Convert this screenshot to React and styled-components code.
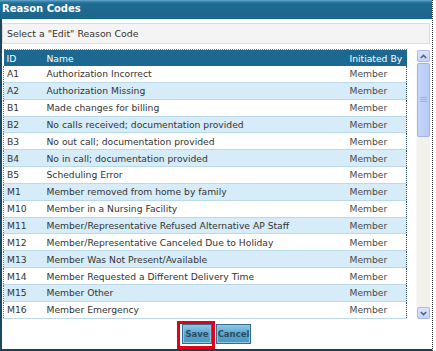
import React from "react";
import styled, { createGlobalStyle } from "styled-components";

const GlobalStyle = createGlobalStyle`
  body {
    margin: 0;
    background: #ffffff;
    font-family: "DejaVu Sans", Verdana, sans-serif;
  }
`;

const Dialog = styled.div`
  box-sizing: border-box;
  width: 433px;
  height: 351px;
  display: flex;
  flex-direction: column;
  border-left: 2px solid #1a4762;
  border-bottom: 2px solid #1d3f55;
  border-right: 1px dotted #222;
  background: #ffffff;
`;

const TitleBar = styled.div`
  height: 19px;
  line-height: 18px;
  margin-left: -2px;
  padding-left: 2px;
  background: linear-gradient(#6aaad0 0, #2d7aa3 2px, #1f6b91 4px, #1c668c 100%);
  color: #ffffff;
  font-size: 10px;
  font-weight: bold;
`;

const Body = styled.div`
  flex: 1;
  display: flex;
  flex-direction: column;
  padding: 4px 2px 0 0;
`;

const Instructions = styled.div`
  box-sizing: border-box;
  height: 21px;
  line-height: 19px;
  padding-left: 4px;
  background: #f4f4f4;
  border: 1px solid #dcdcdc;
  color: #333;
  font-size: 9.4px;
`;

const ListArea = styled.div`
  display: flex;
  margin-top: 5px;
  height: 270px;
  padding-left: 1px;
`;

const TableBox = styled.div`
  width: 404px;
  height: 270px;
  overflow: hidden;
`;

const Table = styled.table`
  width: 100%;
  table-layout: fixed;
  border-collapse: collapse;
  font-size: 9.2px;
`;

const HeadCell = styled.th`
  height: 16px;
  padding: 0 0 0 3px;
  background: #1c6890;
  color: #ffffff;
  font-weight: normal;
  text-align: left;
  border-top: 1px dotted #4c7f9c;
`;

const Row = styled.tr`
  background: ${(p) => (p.$alt ? "#d6ecf8" : "#ffffff")};
  border-bottom: 1px solid #bcd9e8;
`;

const Cell = styled.td`
  height: 15.85px;
  padding: 0 0 0 3px;
  color: ${(p) => (p.$muted ? "#4a4a4a" : "#333333")};
  white-space: nowrap;
  overflow: hidden;
  border-left: ${(p) => (p.$first ? "1px dotted #5a7888" : "none")};
  border-right: ${(p) => (p.$last ? "1px dotted #2f4f62" : "none")};
`;

const ScrollBar = styled.div`
  display: flex;
  flex-direction: column;
  width: 13px;
  height: 269px;
  margin-left: 9px;
  margin-top: 1px;
  background: #f2f1eb;
  border-left: 1px solid #f8f8f5;
`;

const ArrowButton = styled.div`
  box-sizing: border-box;
  height: 12px;
  display: flex;
  align-items: center;
  justify-content: center;
  background: linear-gradient(#dbe6fc, #c3d3f6);
  border: 1px solid #a9bde6;
  border-radius: 2px;
`;

const Thumb = styled.div`
  box-sizing: border-box;
  height: 74px;
  margin-top: 1px;
  display: flex;
  align-items: center;
  justify-content: center;
  background: linear-gradient(90deg, #c6d6fb, #b8cbf6);
  border: 1px solid #9fb5e6;
  border-radius: 2px;
`;

const Track = styled.div`
  flex: 1;
`;

const Footer = styled.div`
  flex: 1;
  display: flex;
  justify-content: center;
  align-items: flex-start;
  gap: 4px;
  padding-top: 5px;
  padding-left: 1px;
`;

const Highlight = styled.span`
  position: relative;
  display: inline-flex;
  &::after {
    content: "";
    position: absolute;
    top: -3px;
    bottom: -5px;
    left: -5px;
    right: -3px;
    border: 3px solid #e3001b;
    pointer-events: none;
  }
`;

const Button = styled.button`
  box-sizing: border-box;
  height: 20px;
  width: ${(p) => p.$w}px;
  padding: 0;
  font-family: "DejaVu Sans", Verdana, sans-serif;
  font-size: 8.5px;
  font-weight: bold;
  color: #2b4d61;
  background: linear-gradient(#93c9e4 0, #5ba7cf 45%, #4a97c1 100%);
  border: 1px solid #2f6e8f;
  box-shadow: inset 0 0 0 1px #8fc6e2;
  cursor: pointer;
`;

const Grip = () => (
  <svg width="7" height="6" viewBox="0 0 7 6">
    <path d="M0 0.5h7M0 2.5h7M0 4.5h7" stroke="#9fb3df" strokeWidth="1" />
  </svg>
);

const Chevron = ({ down }) => (
  <svg width="7" height="5" viewBox="0 0 7 5">
    <path
      d={down ? "M0.8 1l2.7 2.6L6.2 1" : "M0.8 4l2.7-2.6L6.2 4"}
      fill="none"
      stroke="#4b5f8a"
      strokeWidth="1.5"
    />
  </svg>
);

const codes = [
  ["A1", "Authorization Incorrect"],
  ["A2", "Authorization Missing"],
  ["B1", "Made changes for billing"],
  ["B2", "No calls received; documentation provided"],
  ["B3", "No out call; documentation provided"],
  ["B4", "No in call; documentation provided"],
  ["B5", "Scheduling Error"],
  ["M1", "Member removed from home by family"],
  ["M10", "Member in a Nursing Facility"],
  ["M11", "Member/Representative Refused Alternative AP Staff"],
  ["M12", "Member/Representative Canceled Due to Holiday"],
  ["M13", "Member Was Not Present/Available"],
  ["M14", "Member Requested a Different Delivery Time"],
  ["M15", "Member Other"],
  ["M16", "Member Emergency"],
];

export default function App() {
  return (
    <>
      <GlobalStyle />
      <Dialog>
        <TitleBar>Reason Codes</TitleBar>
        <Body>
          <Instructions>Select a "Edit" Reason Code</Instructions>
          <ListArea>
            <TableBox>
              <Table>
                <colgroup>
                  <col style={{ width: 40 }} />
                  <col />
                  <col style={{ width: 60 }} />
                </colgroup>
                <thead>
                  <tr>
                    <HeadCell>ID</HeadCell>
                    <HeadCell>Name</HeadCell>
                    <HeadCell>Initiated By</HeadCell>
                  </tr>
                </thead>
                <tbody>
                  {codes.map(([id, name], i) => (
                    <Row key={id} $alt={i % 2 === 1}>
                      <Cell $first>{id}</Cell>
                      <Cell>{name}</Cell>
                      <Cell $last $muted>
                        Member
                      </Cell>
                    </Row>
                  ))}
                </tbody>
              </Table>
            </TableBox>
            <ScrollBar>
              <ArrowButton>
                <Chevron />
              </ArrowButton>
              <Thumb>
                <Grip />
              </Thumb>
              <Track />
              <ArrowButton>
                <Chevron down />
              </ArrowButton>
            </ScrollBar>
          </ListArea>
          <Footer>
            <Highlight>
              <Button $w={30}>Save</Button>
            </Highlight>
            <Button $w={35}>Cancel</Button>
          </Footer>
        </Body>
      </Dialog>
    </>
  );
}
